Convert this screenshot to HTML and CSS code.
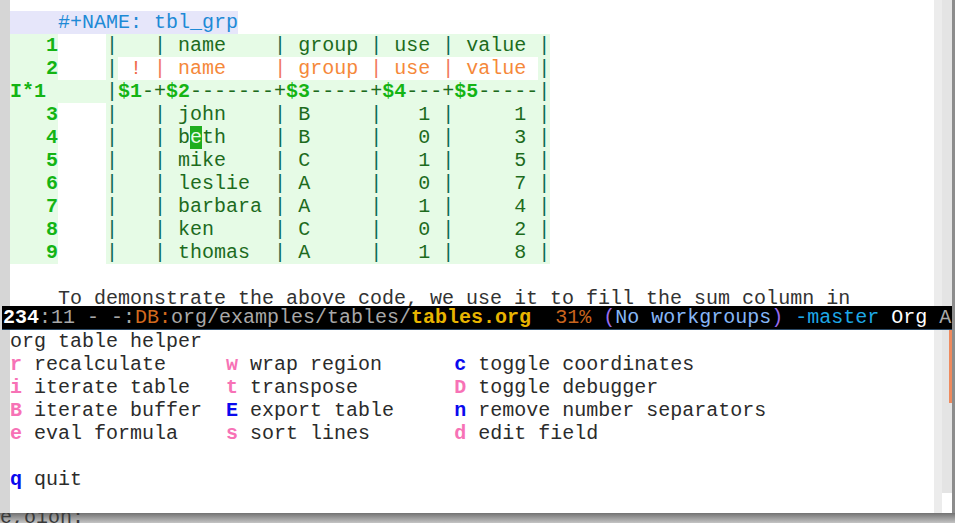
FILE: index.html
```html
<!DOCTYPE html>
<html>
<head>
<meta charset="utf-8">
<title>org table helper</title>
<link rel="stylesheet" href="styles.css">
</head>
<body>
<div class="screen">
  <div class="band upper">
    <div class="edge"></div>
    <div class="buffer top-buffer">
<div class="line"><span class="kw-band">    <span class="kw">#+NAME: tbl_grp</span></span></div>
<div class="line"><span class="tb lbl">   1</span>    <span class="tb"><span class="p">|</span>   <span class="p">|</span> name    <span class="p">|</span> group <span class="p">|</span> use <span class="p">|</span> value <span class="p">|</span></span></div>
<div class="line"><span class="tb lbl">   2</span>    <span class="tb"><span class="p">|</span></span><span class="hdr"> <span class="bang">!</span> <span class="op">|</span> name    <span class="op">|</span> group <span class="op">|</span> use <span class="op">|</span> value </span><span class="tb"><span class="p">|</span></span></div>
<div class="line"><span class="tb"><span class="lbl">I*1</span>     <span class="p">|</span><span class="lbl">$1</span>-+<span class="lbl">$2</span>-------+<span class="lbl">$3</span>-----+<span class="lbl">$4</span>---+<span class="lbl">$5</span>-----<span class="p">|</span></span></div>
<div class="line"><span class="tb lbl">   3</span>    <span class="tb"><span class="p">|</span>   <span class="p">|</span> john    <span class="p">|</span> B     <span class="p">|</span>   1 <span class="p">|</span>     1 <span class="p">|</span></span></div>
<div class="line"><span class="tb lbl">   4</span>    <span class="tb"><span class="p">|</span>   <span class="p">|</span> b<span class="cursor">e</span>th    <span class="p">|</span> B     <span class="p">|</span>   0 <span class="p">|</span>     3 <span class="p">|</span></span></div>
<div class="line"><span class="tb lbl">   5</span>    <span class="tb"><span class="p">|</span>   <span class="p">|</span> mike    <span class="p">|</span> C     <span class="p">|</span>   1 <span class="p">|</span>     5 <span class="p">|</span></span></div>
<div class="line"><span class="tb lbl">   6</span>    <span class="tb"><span class="p">|</span>   <span class="p">|</span> leslie  <span class="p">|</span> A     <span class="p">|</span>   0 <span class="p">|</span>     7 <span class="p">|</span></span></div>
<div class="line"><span class="tb lbl">   7</span>    <span class="tb"><span class="p">|</span>   <span class="p">|</span> barbara <span class="p">|</span> A     <span class="p">|</span>   1 <span class="p">|</span>     4 <span class="p">|</span></span></div>
<div class="line"><span class="tb lbl">   8</span>    <span class="tb"><span class="p">|</span>   <span class="p">|</span> ken     <span class="p">|</span> C     <span class="p">|</span>   0 <span class="p">|</span>     2 <span class="p">|</span></span></div>
<div class="line"><span class="tb lbl">   9</span>    <span class="tb"><span class="p">|</span>   <span class="p">|</span> thomas  <span class="p">|</span> A     <span class="p">|</span>   1 <span class="p">|</span>     8 <span class="p">|</span></span></div>
<div class="line"> </div>
<div class="line">    To demonstrate the above code, we use it to fill the sum column in</div>
    </div>
    <div class="fringe"></div>
    <div class="scroll"></div>
    <div class="shadow"></div>
  </div>

  <div class="band modebar">
    <div class="lead"></div>
    <div class="modeline"><span class="ml-line">234</span>:11 - -:<span class="ml-db">DB:</span>org/examples/tables/<span class="ml-file">tables.org</span>  <span class="ml-pct">31%</span> <span class="ml-paren">(</span><span class="ml-wg">No workgroups</span><span class="ml-paren">)</span> <span class="ml-git">-master</span> <span class="ml-mode">Org</span> A</div>
    <div class="shadow"></div>
  </div>

  <div class="band lower">
    <div class="edge"></div>
    <div class="buffer hydra">
<div class="line">org table helper</div>
<div class="line"><span class="kp">r</span> recalculate     <span class="kp">w</span> wrap region      <span class="kb">c</span> toggle coordinates</div>
<div class="line"><span class="kp">i</span> iterate table   <span class="kp">t</span> transpose        <span class="kp">D</span> toggle debugger</div>
<div class="line"><span class="kp">B</span> iterate buffer  <span class="kb">E</span> export table     <span class="kb">n</span> remove number separators</div>
<div class="line"><span class="kp">e</span> eval formula    <span class="kp">s</span> sort lines       <span class="kp">d</span> edit field</div>
<div class="line"> </div>
<div class="line"><span class="kb">q</span> quit</div>
    </div>
    <div class="fringe"></div>
    <div class="scroll lower-scroll">
      <div class="scroll-track"><div class="scroll-mark"></div></div>
      <div class="scroll-foot"></div>
    </div>
    <div class="shadow"></div>
  </div>

  <div class="bottom"><span class="under-text">e,oion:</span></div>
</div>
</body>
</html>
```

FILE: styles.css
```css
html, body {
  margin: 0;
  padding: 0;
}

body {
  background: #d6d6d6;
  font-family: "Liberation Mono", "DejaVu Sans Mono", monospace;
  font-size: 20px;
}

.screen {
  width: 955px;
  height: 523px;
  display: flex;
  flex-direction: column;
  overflow: hidden;
}

.band {
  display: flex;
  flex: none;
}

.upper {
  height: 306px;
}

.edge {
  width: 10px;
  flex: none;
  background: #d6d6d6;
}

.buffer {
  width: 924px;
  flex: none;
  background: #ffffff;
  overflow: hidden;
  box-sizing: border-box;
}

.top-buffer {
  padding-top: 11px;
}

.fringe {
  width: 8px;
  flex: none;
  background: #ececec;
}

.scroll {
  width: 10px;
  flex: none;
  background: #e4e4e4;
}

.shadow {
  width: 3px;
  flex: none;
  background: #8c8c8c;
}

.line {
  height: 23px;
  line-height: 23px;
  white-space: pre;
  color: #333333;
}

/* #+NAME keyword */
.kw-band {
  background: #e6e6fa;
}

.kw {
  color: #1e8ad6;
}

/* org table */
.tb {
  background: #e6fbe6;
  color: #1d6b1d;
}

.lbl {
  color: #14b414;
  font-weight: bold;
}

.p {
  color: #0b6b55;
}

.hdr {
  background: #ffffff;
  color: #f5883a;
}

.bang {
  color: #f06a4a;
}

.op {
  color: #f2785c;
}

.cursor {
  background: #1fae1f;
  color: #e6fbe6;
}

/* mode line */
.modebar {
  height: 24px;
}

.lead {
  width: 2px;
  flex: none;
  background: #d6d6d6;
}

.modeline {
  width: 950px;
  flex: none;
  box-sizing: border-box;
  height: 24px;
  padding: 1px 0 0 1px;
  line-height: 22px;
  background: #000000;
  color: #a8a8a8;
  white-space: pre;
  overflow: hidden;
  border-bottom: 1px solid #2c4a66;
}

.ml-line {
  color: #ffffff;
  font-weight: bold;
}

.ml-db {
  color: #d2691e;
}

.ml-file {
  color: #e8b400;
  font-weight: bold;
}

.ml-pct {
  color: #c8641e;
}

.ml-paren {
  color: #9a6cf0;
}

.ml-wg {
  color: #86b6f6;
}

.ml-git {
  color: #1ea8e6;
}

.ml-mode {
  color: #ffffff;
}

/* hydra */
.lower {
  height: 183px;
}

.hydra .line {
  color: #2b2b2b;
}

.kp {
  color: #f772b6;
  font-weight: bold;
}

.kb {
  color: #0a0aee;
  font-weight: bold;
}

.lower-scroll {
  display: flex;
  flex-direction: column;
}

.scroll-track {
  flex: 1;
  display: flex;
  justify-content: flex-end;
  align-items: flex-start;
}

.scroll-mark {
  width: 3px;
  height: 73px;
  background: #ee8a5e;
}

.scroll-foot {
  height: 20px;
  flex: none;
  background: #ffffff;
}

.bottom {
  height: 10px;
  flex: none;
  background: linear-gradient(#727272, #c4c4c4);
  font-size: 20px;
  line-height: 10px;
  color: #3a3a3a;
  overflow: hidden;
  white-space: pre;
}

.under-text {
  display: inline-block;
  margin-top: -8px;
}
```
